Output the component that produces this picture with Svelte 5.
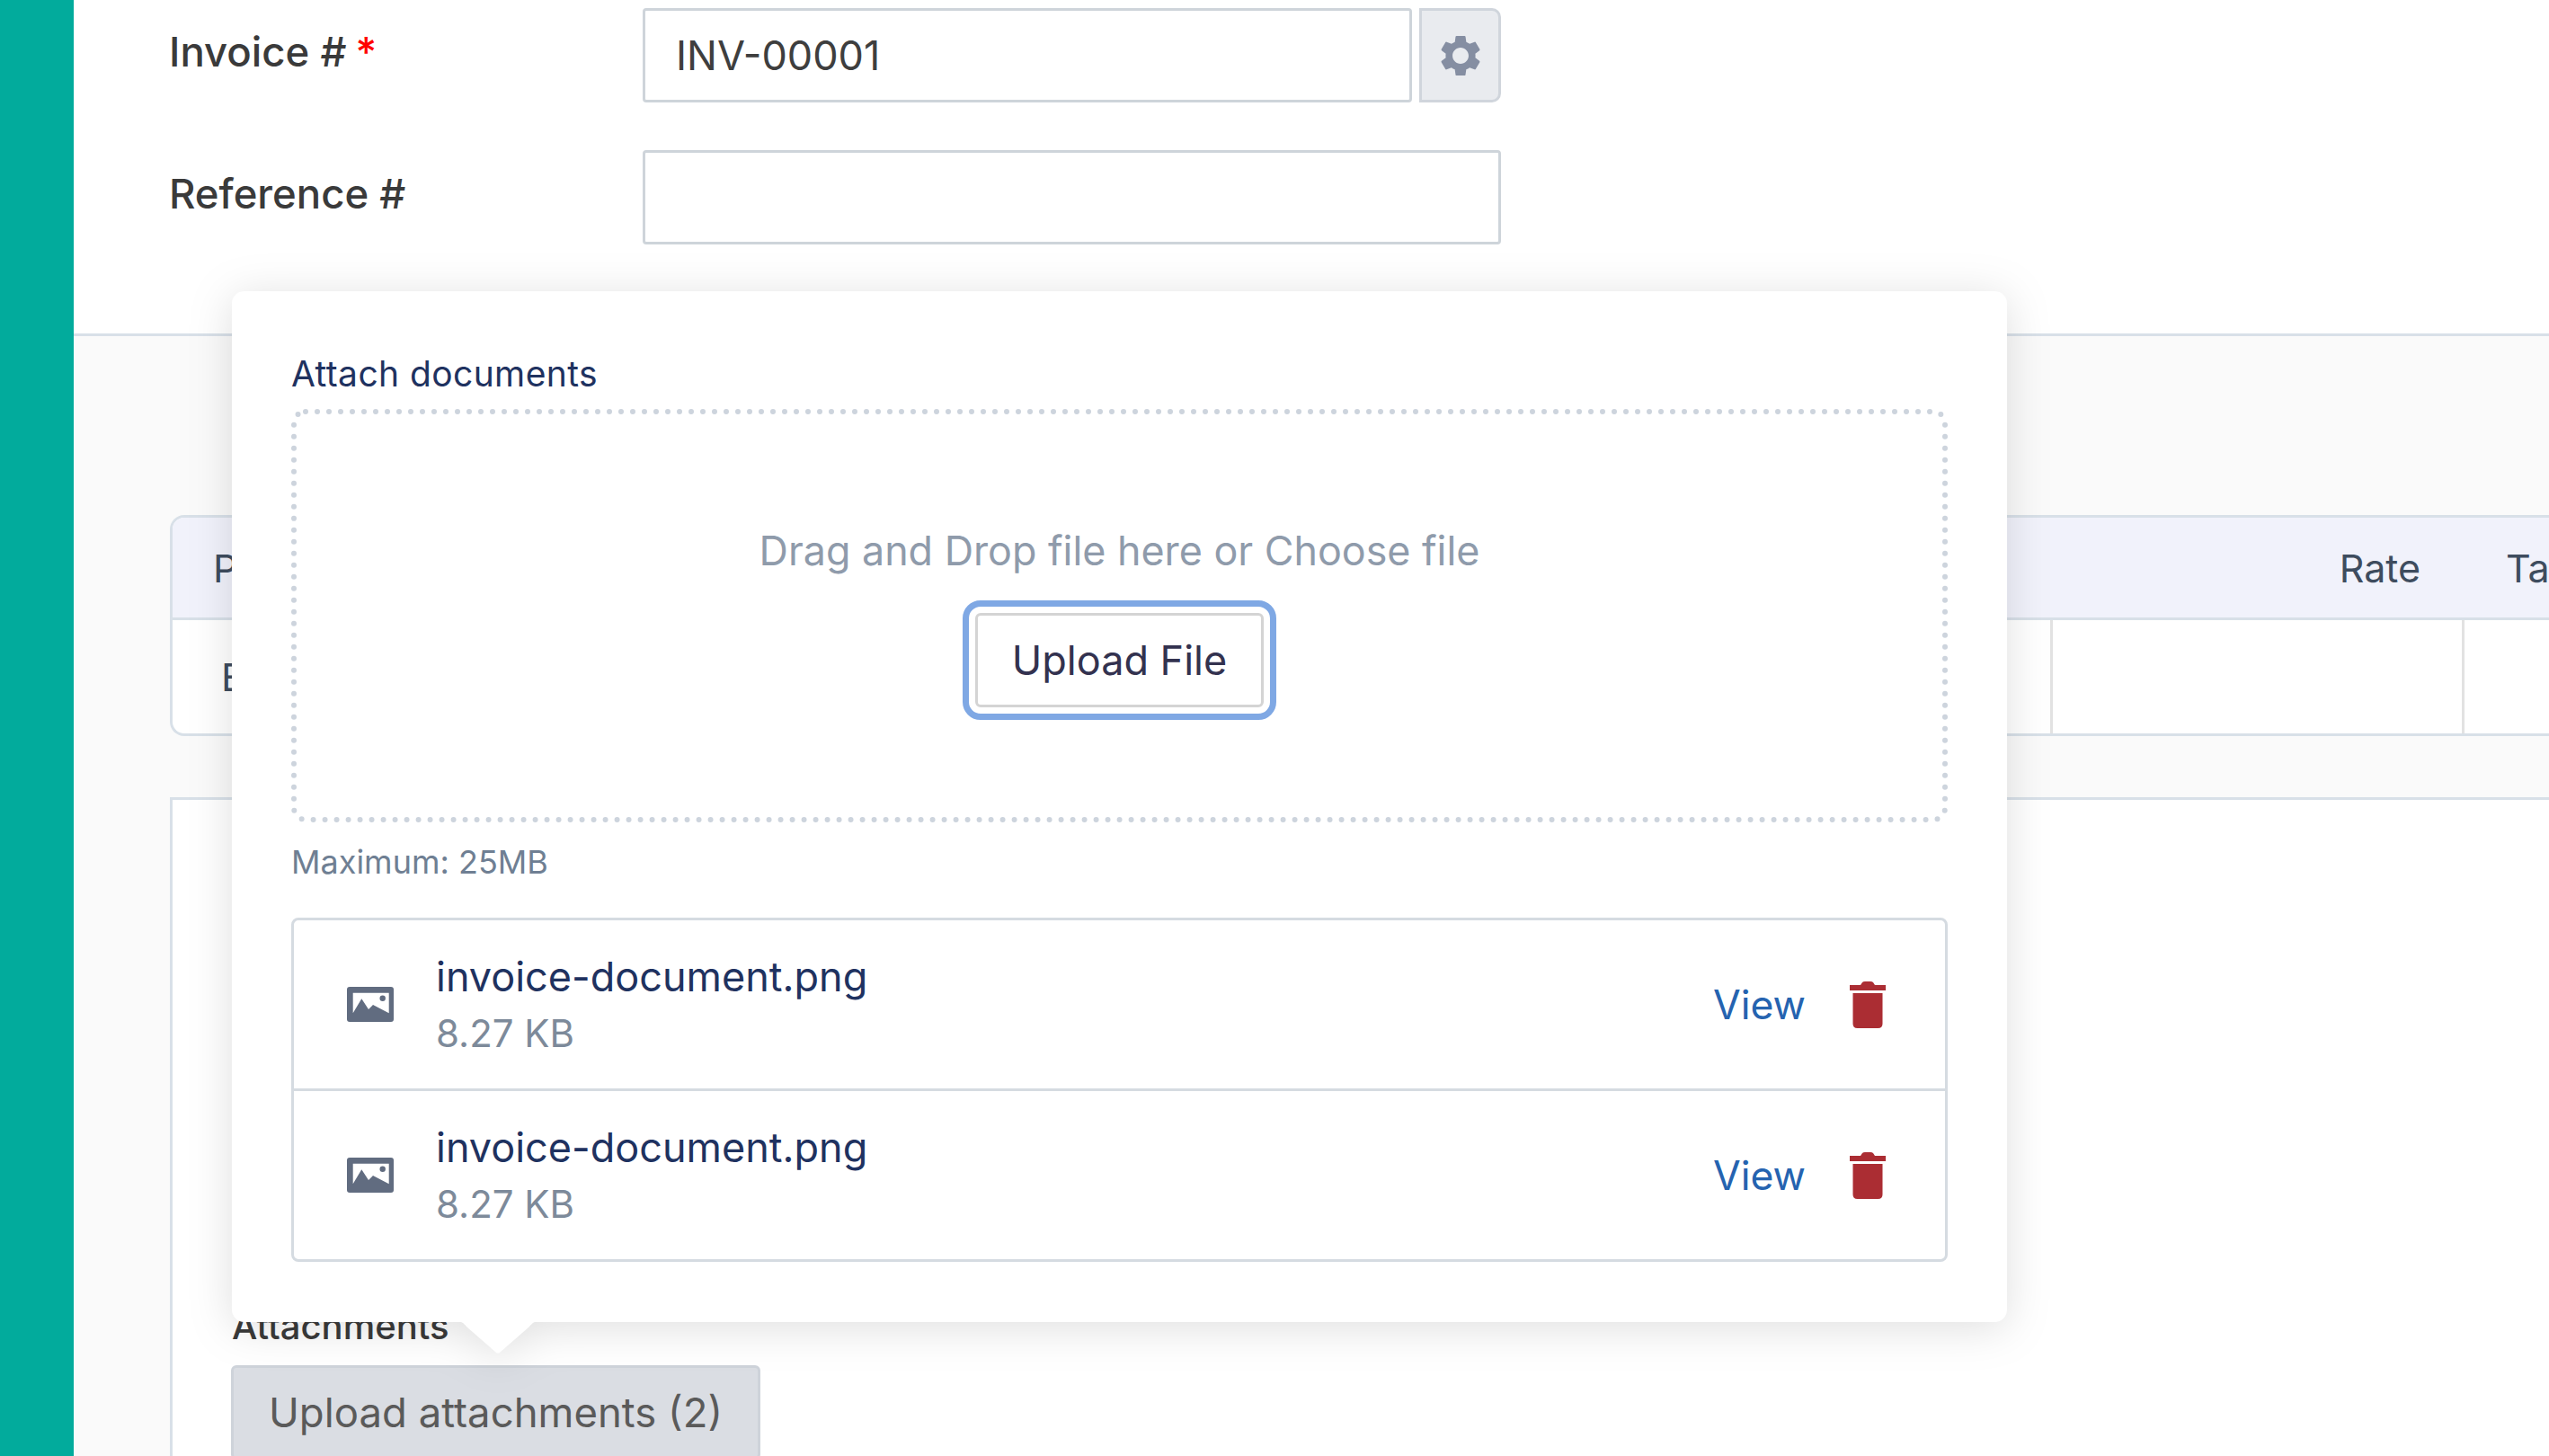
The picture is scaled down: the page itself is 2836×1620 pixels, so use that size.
<script>
  const files = [
    { name: 'invoice-document.png', size: '8.27 KB' },
    { name: 'invoice-document.png', size: '8.27 KB' },
  ];
</script>

<div class="page">
  <aside class="rail"></aside>

  <main class="main">
    <section class="form">
      <div class="field">
        <label for="invoice">Invoice # <span class="req">*</span></label>
        <div class="group">
          <input id="invoice" class="text grow" value="INV-00001" />
          <button type="button" class="gear" aria-label="Settings">
            <svg width="46" height="46" viewBox="2 2 20 20"><path fill="#858ea2" fill-rule="evenodd" d="M19.14 12.94c.04-.3.06-.61.06-.94 0-.32-.02-.64-.07-.94l2.03-1.58a.49.49 0 0 0 .12-.61l-1.92-3.32a.488.488 0 0 0-.59-.22l-2.39.96c-.5-.38-1.03-.7-1.62-.94l-.36-2.54a.484.484 0 0 0-.48-.41h-3.84c-.24 0-.43.17-.47.41l-.36 2.54c-.59.24-1.13.57-1.62.94l-2.39-.96c-.22-.08-.47 0-.59.22L2.74 8.87c-.12.21-.08.47.12.61l2.03 1.58c-.05.3-.09.63-.09.94s.02.64.07.94l-2.03 1.58a.49.49 0 0 0-.12.61l1.92 3.32c.12.22.37.29.59.22l2.39-.96c.5.38 1.03.7 1.62.94l.36 2.54c.05.24.24.41.48.41h3.84c.24 0 .44-.17.47-.41l.36-2.54c.59-.24 1.13-.56 1.62-.94l2.39.96c.22.08.47 0 .59-.22l1.92-3.32c.12-.22.07-.47-.12-.61l-2.01-1.58zM12 15.9c-2.15 0-3.9-1.75-3.9-3.9s1.75-3.9 3.9-3.9 3.9 1.75 3.9 3.9-1.75 3.9-3.9 3.9z"/></svg>
          </button>
        </div>
      </div>
      <div class="field">
        <label for="reference">Reference #</label>
        <div class="group"><input id="reference" class="text grow" /></div>
      </div>
    </section>

    <section class="body">
      <div class="items">
        <div class="cell head first">Product</div>
        <div class="cell head rate">Rate</div>
        <div class="cell head tax">Tax</div>
        <div class="cell row first">Enter</div>
        <div class="cell row"></div>
        <div class="cell row"></div>
      </div>

      <div class="lower">
        <div class="att-label">Attachments</div>
        <button type="button" class="att-btn">Upload attachments (2)</button>
      </div>
    </section>

    <div class="pop">
      <div class="pop-card">
        <div class="pop-title">Attach documents</div>
        <div class="drop">
          <svg class="dots" width="1843" height="460">
            <rect x="3" y="3" width="1837" height="454" rx="13" fill="none" stroke="#cdd4dd" stroke-width="6" stroke-linecap="round" stroke-dasharray="0 13" />
          </svg>
          <div class="drop-text">Drag and Drop file here or Choose file</div>
          <button type="button" class="upload">Upload File</button>
        </div>
        <div class="max">Maximum: 25MB</div>
        <div class="list">
          {#each files as f}
            <div class="file">
              <svg class="thumb" width="52" height="39" viewBox="0 0 52 39">
                <rect width="52" height="39" rx="3" fill="#616c80" />
                <path fill="#fff" d="M6.700 6.700h40v22.600L29 20l-5 5-7.700-11.700-9.600 16z" />
                <circle cx="39.700" cy="12.700" r="3.200" fill="#616c80" />
              </svg>
              <div class="meta">
                <div class="fname">{f.name}</div>
                <div class="fsize">{f.size}</div>
              </div>
              <span class="view">View</span>
              <svg class="trash" width="40" height="52" viewBox="0 0 40 52">
                <path fill="#ab2d33" d="M0 4h12l2-3q1-1 3-1h6q2 0 3 1l2 3h12v6H0zM3.500 13h33v34q0 5-5 5h-23q-5 0-5-5z" />
              </svg>
            </div>
          {/each}
        </div>
      </div>
      <svg class="tip" width="94" height="37" viewBox="0 0 94 37">
        <path fill="#fff" d="M0 0h94c-6 0-9 2-12 6L50 34q-3 3-6 0L12 6C9 2 6 0 0 0z" />
      </svg>
    </div>
  </main>
</div>

<style>
  :global(body) { margin: 0; background: #fff; overflow: hidden; }
  .page { display: flex; height: 1620px; width: 2836px; overflow: hidden; font-family: Inter, "Liberation Sans", sans-serif; }
  .rail { width: 82px; flex: none; background: #02ab9c; }
  .main { position: relative; flex: 1; min-width: 0; overflow: hidden; display: flex; flex-direction: column; }

  .form { padding: 9px 0 99px 106px; border-bottom: 3px solid #d8e0e8; display: flex; flex-direction: column; gap: 53px; }
  .field { display: flex; }
  .field label { width: 527px; flex: none; font-size: 45.5px; font-weight: 500; line-height: 98px; color: #3a3a3a; }
  .req { color: #f00; margin-left: -2px; }
  .group { width: 955px; display: flex; gap: 8px; }
  .text { box-sizing: border-box; height: 105px; border: 3px solid #ced4da; border-radius: 4px; padding: 0 34px; font: 400 45px Inter, sans-serif; color: #3e3e3e; background: #fff; outline: none; }
  .grow { flex: 1; min-width: 0; }
  .gear { width: 91px; flex: none; height: 105px; border: 3px solid #d0d5dc; border-radius: 0 10px 10px 0; background: #e9ebef; padding: 0; display: flex; align-items: center; justify-content: center; }

  .body { flex: 1; background: #fafafa; padding: 199px 0 0 107px; }
  .items { display: grid; grid-template-columns: 2089px 458px 500px; width: 3050px; border: 3px solid #d8e0e8; border-right: 0; border-radius: 16px 0 0 16px; background: #fff; overflow: hidden; box-sizing: border-box; }
  .cell { box-sizing: border-box; font-size: 43px; color: #3e4c5e; display: flex; align-items: center; }
  .head { height: 114px; background: #f1f2fb; border-bottom: 3px solid #d8e0e8; }
  .head.first { padding-left: 45px; }
  .rate { justify-content: flex-end; padding-right: 46px; }
  .tax { padding-left: 49px; }
  .row { height: 126px; border-left: 3px solid #e2e2e2; }
  .row.first { border-left: 0; padding-left: 54px; }

  .lower { margin-top: 68px; height: 900px; background: #fff; border: 3px solid #d8e0e8; border-right: 0; border-bottom: 0; padding: 0 0 0 66px; }
  .att-label { padding-top: 563px; font-size: 40px; font-weight: 500; line-height: 46px; color: #3a3a3a; }
  .att-btn { display: block; margin: 20px 0 0 -1px; box-sizing: border-box; width: 589px; height: 105px; background: #dadde3; border: 3px solid #ced3da; border-radius: 6px; font: 400 45.5px Inter, sans-serif; color: #5a5a5a; padding: 0; }

  .pop { position: absolute; left: 176px; top: 324px; width: 1975px; filter: drop-shadow(0 6px 24px rgba(0, 0, 0, 0.13)); }
  .pop-card { box-sizing: border-box; background: #fff; border-radius: 14px; padding: 70px 66px 67px 66px; }
  .tip { position: absolute; left: 249px; top: 100%; display: block; margin-top: -1px; }
  .pop-title { font-size: 39px; letter-spacing: 0.4px; line-height: 44px; color: #1f3260; margin-bottom: 17px; }
  .drop { position: relative; box-sizing: border-box; height: 460px; display: flex; flex-direction: column; align-items: center; padding-top: 135px; }
  .dots { position: absolute; left: 0; top: 0; }
  .drop-text { font-size: 44.8px; line-height: 46px; color: #8f9bab; margin-bottom: 46px; }
  .upload { box-sizing: border-box; width: 321px; height: 105px; background: #fff; border: 3px solid #d4d4d4; border-radius: 6px; font: 400 45px Inter, sans-serif; color: #33324f; padding: 0; outline: 7px solid #7fa8e4; outline-offset: 7px; }
  .max { margin-top: 24px; font-size: 36px; line-height: 40px; color: #6f7f93; }
  .list { margin-top: 42px; border: 3px solid #d5dbe1; border-radius: 8px; }
  .file { height: 187px; display: flex; align-items: center; padding: 0 66px 0 59px; }
  .file + .file { border-top: 3px solid #d5dbe1; }
  .thumb { flex: none; margin-right: 47px; }
  .meta { flex: 1; min-width: 0; padding-top: 2px; }
  .fname { font-size: 45px; line-height: 62px; color: #1f3260; }
  .fsize { font-size: 42px; line-height: 62px; color: #7d8a9a; padding-top: 1px; }
  .view { font-size: 44.5px; color: #2563b0; margin-right: 49px; }
  .trash { flex: none; }
</style>
